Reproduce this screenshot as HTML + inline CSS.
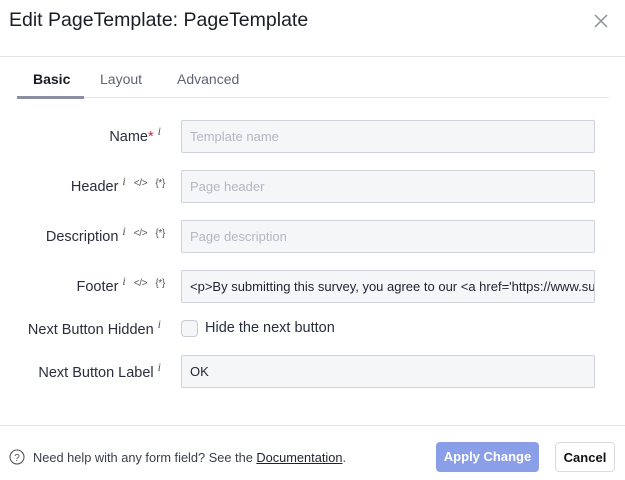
<!DOCTYPE html>
<html><head><style>
body{margin:0;width:625px;height:480px;background:#fff;font-family:"Liberation Sans",sans-serif;color:#1f2330;position:relative;overflow:hidden}
.a{position:absolute}
.title{left:9px;top:9px;font-size:19.5px;color:#1a1d26}
.x{right:17px;top:14px;width:14px;height:14px}
.hl{left:0;right:0;top:56px;height:1px;background:#e3e5ea}
.tab{top:71px;font-size:14px;color:#5f6473}
.tl{left:17px;width:592px;top:97px;height:1px;background:#e3e5ea}
.ta{left:17px;width:67px;top:96px;height:3px;background:#8b90a0}
.lab{font-size:14.5px;color:#2a2e3a;text-align:right;white-space:nowrap}
.i{font-style:italic;font-family:"Liberation Serif",serif;font-size:12px;color:#555;vertical-align:6px;margin-left:4px}
.ic{font-size:10px;color:#555;vertical-align:5px;margin-left:8px;letter-spacing:-.3px}
.in{left:181px;border:1px solid #cfd2da;background:#f5f6f8;border-radius:2px;font-size:13px;line-height:31px;padding-left:8px;box-sizing:border-box;width:414px;height:33px;color:#b3b7c1;white-space:nowrap;overflow:hidden}
.fl{left:0;right:0;top:425px;height:1px;background:#e3e5ea}
.btn{top:442px;height:30px;border-radius:4px;font-size:13px;font-weight:bold;line-height:30px;text-align:center}
</style></head><body>
<div class="a title">Edit PageTemplate: PageTemplate</div>
<svg class="a x" viewBox="0 0 14 14"><path d="M1 1L13 13M13 1L1 13" stroke="#8a8f9a" stroke-width="1.5"/></svg>
<div class="a hl"></div>
<div class="a tab" style="left:33px;color:#1a1d26;font-weight:bold">Basic</div>
<div class="a tab" style="left:100px">Layout</div>
<div class="a tab" style="left:177px">Advanced</div>
<div class="a tl"></div><div class="a ta"></div>

<div class="a lab" style="right:464px;top:124px">Name<span style="color:#d0213c">*</span><span class="i">i</span></div>
<div class="a in" style="top:120px">Template name</div>

<div class="a lab" style="right:460px;top:174px">Header<span class="i">i</span><span class="ic">&lt;/&gt;</span><span class="ic">{*}</span></div>
<div class="a in" style="top:170px">Page header</div>

<div class="a lab" style="right:460px;top:224px">Description<span class="i">i</span><span class="ic">&lt;/&gt;</span><span class="ic">{*}</span></div>
<div class="a in" style="top:220px">Page description</div>

<div class="a lab" style="right:460px;top:274px">Footer<span class="i">i</span><span class="ic">&lt;/&gt;</span><span class="ic">{*}</span></div>
<div class="a in" style="top:270px;color:#1f2330">&lt;p&gt;By submitting this survey, you agree to our &lt;a href='https://www.surveyjs.io'&gt;</div>

<div class="a lab" style="right:464px;top:317px">Next Button Hidden<span class="i">i</span></div>
<div class="a" style="left:181px;top:320px;width:15px;height:15px;border:1px solid #c9ccd4;border-radius:4px;background:#f5f6f8"></div>
<div class="a" style="left:205px;top:320px;font-size:14.5px;color:#2a2e3a">Hide the next button</div>

<div class="a lab" style="right:464px;top:360px">Next Button Label<span class="i">i</span></div>
<div class="a in" style="top:355px;color:#1f2330">OK</div>

<div class="a fl"></div>
<svg class="a" style="left:9px;top:449px" width="16" height="16" viewBox="0 0 16 16"><circle cx="8" cy="8" r="7" fill="none" stroke="#555" stroke-width="1.1"/><text x="8" y="12" font-size="10" text-anchor="middle" fill="#555" font-family="Liberation Sans">?</text></svg>
<div class="a" style="left:33px;top:450px;font-size:12.8px;color:#3a3e4a">Need help with any form field? See the <span style="text-decoration:underline;color:#1f2330">Documentation</span>.</div>
<div class="a btn" style="left:436px;width:103px;background:#8a9fe8;color:#fff">Apply Change</div>
<div class="a btn" style="left:555px;width:60px;border:1px solid #d8dbe1;box-sizing:border-box;color:#111">Cancel</div>
</body></html>
